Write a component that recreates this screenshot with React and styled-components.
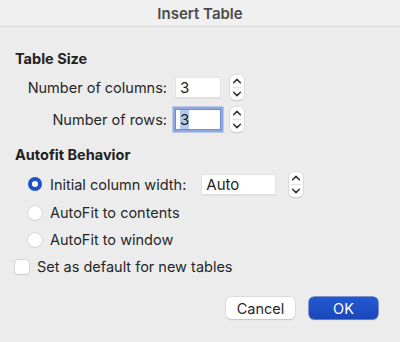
import React from "react";
import styled, { createGlobalStyle } from "styled-components";

const Global = createGlobalStyle`
  html, body { margin: 0; padding: 0; background: #ececec; }
  body { font-family: Inter, "Noto Sans", sans-serif; -webkit-font-smoothing: antialiased; }
`;

const Window = styled.div`
  width: 400px;
  height: 342px;
  background: #ececec;
  display: flex;
  flex-direction: column;
  color: #262626;
  font-size: 14.5px;
  overflow: hidden;
  border-bottom-right-radius: 10px;
`;

const TitleBar = styled.div`
  height: 26px;
  flex: none;
  background: #f0f0f0;
  border-bottom: 1px solid #d9d9d9;
  display: flex;
  align-items: center;
  justify-content: center;
  font-weight: 600;
  font-size: 15px;
  color: #4b4b4b;
`;

const Body = styled.div`
  flex: 1;
  display: flex;
  flex-direction: column;
  padding: 23px 15px 0 15px;
`;

const Heading = styled.div`
  font-weight: 700;
  font-size: 14.5px;
  height: 18px;
  line-height: 18px;
  color: #222;
`;

const FieldGrid = styled.div`
  display: grid;
  grid-template-columns: 152px auto auto;
  column-gap: 8px;
  row-gap: 7px;
  align-items: center;
  margin-top: 7px;
  justify-content: start;
`;

const Label = styled.div`
  text-align: right;
  white-space: nowrap;
`;

const TextBox = styled.div`
  width: ${(p) => p.$w}px;
  height: 21px;
  box-sizing: border-box;
  background: #fff;
  border: 1px solid ${(p) => (p.$focus ? "#6e8fd6" : "#e2e2e2")};
  box-shadow: ${(p) => (p.$focus ? "0 0 0 2.5px #8ea7e0" : "0 0.5px 0 #d0d0d0")};
  display: flex;
  align-items: center;
  padding-left: 4px;
  font-size: 15px;
  color: #1e1e1e;
`;

const Selected = styled.span`
  background: #b3c9ee;
`;

const StepperBox = styled.div`
  width: 14px;
  height: 25px;
  margin-left: ${(p) => p.$ml || 0}px;
  background: #fff;
  border-radius: 5px;
  box-shadow: 0 0 0 0.5px #cfcfcf, 0 0.5px 1px rgba(0,0,0,0.18);
  display: flex;
  flex-direction: column;
  align-items: center;
  justify-content: space-between;
  box-sizing: border-box;
  padding: 3px 0;
  position: relative;
  &::after {
    content: "";
    position: absolute;
    left: 2px; right: 2px; top: 12px;
    height: 1px;
    background: #e4e4e4;
  }
`;

const Stepper = ({ ml }) => (
  <StepperBox $ml={ml}>
    <svg width="10" height="6" viewBox="0 0 10 6">
      <path d="M1.6 4.8 L5 1.4 L8.4 4.8" fill="none" stroke="#333" strokeWidth="1.5" strokeLinecap="round" strokeLinejoin="round" />
    </svg>
    <svg width="10" height="6" viewBox="0 0 10 6">
      <path d="M1.6 1.2 L5 4.6 L8.4 1.2" fill="none" stroke="#333" strokeWidth="1.5" strokeLinecap="round" strokeLinejoin="round" />
    </svg>
  </StepperBox>
);

const Section2 = styled.div`
  margin-top: 14px;
`;

const OptionList = styled.div`
  display: flex;
  flex-direction: column;
  padding-left: 13px;
  margin-top: 5px;
`;

const OptionRow = styled.div`
  display: flex;
  align-items: center;
  height: ${(p) => p.$h || 27}px;
`;

const Radio = styled.span`
  width: 14px;
  height: 14px;
  border-radius: 50%;
  box-sizing: border-box;
  flex: none;
  margin-right: 8px;
  display: flex;
  align-items: center;
  justify-content: center;
  background: ${(p) => (p.$on ? "#1c52c8" : "#fff")};
  box-shadow: ${(p) => (p.$on ? "none" : "0 0 0 0.5px #c4c4c4, 0 0.5px 1px rgba(0,0,0,0.15)")};
  &::after {
    content: "";
    display: ${(p) => (p.$on ? "block" : "none")};
    width: 6px;
    height: 6px;
    border-radius: 50%;
    background: #fff;
  }
`;

const InlineBox = styled.div`
  margin-left: 15px;
  display: flex;
  align-items: center;
`;

const CheckRow = styled.div`
  display: flex;
  align-items: center;
  height: 27px;
`;

const Check = styled.span`
  width: 14px;
  height: 14px;
  border-radius: 3.5px;
  background: #fff;
  box-shadow: 0 0 0 0.5px #c4c4c4, 0 0.5px 1px rgba(0,0,0,0.15);
  margin-right: 8px;
  flex: none;
`;

const Buttons = styled.div`
  display: flex;
  justify-content: flex-end;
  gap: 14px;
  margin-top: 17px;
  padding-right: 7px;
`;

const Button = styled.div`
  width: 69px;
  height: 22px;
  border-radius: 5px;
  box-sizing: border-box;
  display: flex;
  align-items: center;
  justify-content: center;
  font-size: 14.5px;
  color: ${(p) => (p.$primary ? "#fff" : "#262626")};
  background: ${(p) => (p.$primary ? "linear-gradient(#2459d2, #1a47b9)" : "#fff")};
  box-shadow: ${(p) =>
    p.$primary
      ? "0 0 0 0.5px #1a43a8, 0 0.5px 1px rgba(0,0,0,0.25)"
      : "0 0 0 0.5px #cfcfcf, 0 0.5px 1px rgba(0,0,0,0.2)"};
`;

export default function App() {
  return (
    <>
      <Global />
      <Window>
        <TitleBar>Insert Table</TitleBar>
        <Body>
          <Heading>Table Size</Heading>
          <FieldGrid>
            <Label>Number of columns:</Label>
            <TextBox $w={46}>3</TextBox>
            <Stepper ml={1} />
            <Label>Number of rows:</Label>
            <TextBox $w={46} $focus>
              <Selected>3</Selected>
            </TextBox>
            <Stepper ml={1} />
          </FieldGrid>
          <Section2>
            <Heading>Autofit Behavior</Heading>
            <OptionList>
              <OptionRow $h={30}>
                <Radio $on />
                Initial column width:
                <InlineBox>
                  <TextBox $w={75}>Auto</TextBox>
                  <Stepper ml={13} />
                </InlineBox>
              </OptionRow>
              <OptionRow>
                <Radio />
                AutoFit to contents
              </OptionRow>
              <OptionRow>
                <Radio />
                AutoFit to window
              </OptionRow>
            </OptionList>
          </Section2>
          <CheckRow>
            <Check />
            Set as default for new tables
          </CheckRow>
          <Buttons>
            <Button>Cancel</Button>
            <Button $primary>OK</Button>
          </Buttons>
        </Body>
      </Window>
    </>
  );
}
